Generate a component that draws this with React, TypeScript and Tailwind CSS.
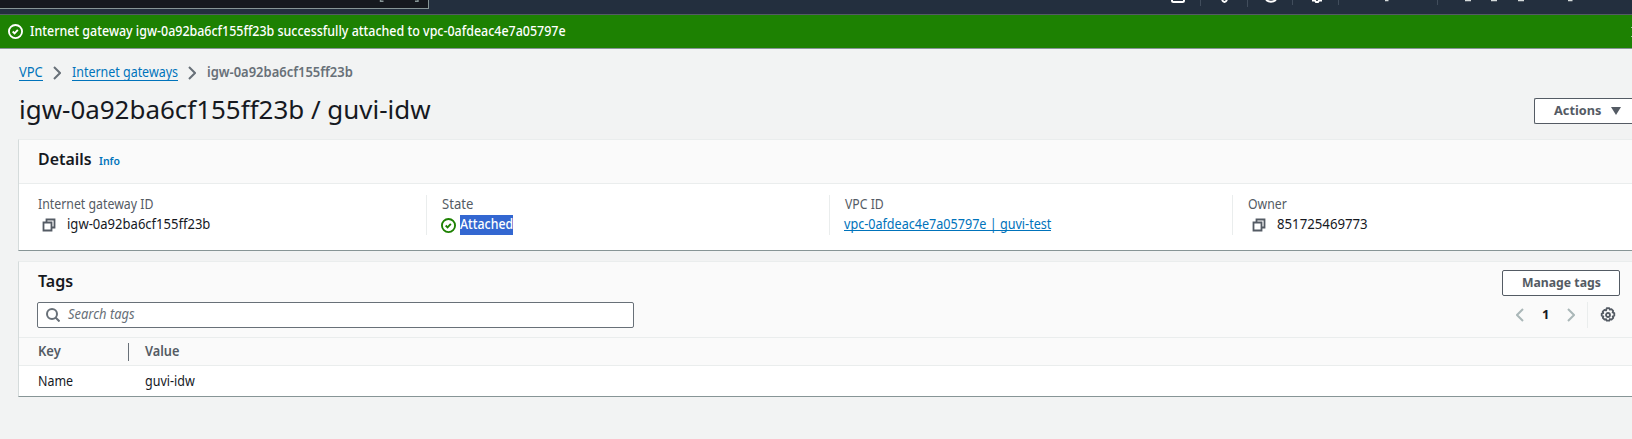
import React from "react";

function T({ w, className, children }: { w: number; className: string; children: React.ReactNode }) {
  const ref = React.useRef<HTMLSpanElement>(null);
  const [s, setS] = React.useState(1);
  React.useLayoutEffect(() => {
    if (ref.current) setS(w / ref.current.offsetWidth);
  }, [w]);
  return (
    <span className="flex shrink-0 whitespace-nowrap" style={{ width: w }}>
      <span ref={ref} className={"shrink-0 origin-left whitespace-nowrap " + className} style={{ transform: `translateY(-1px) scaleX(${s})` }}>
        {children}
      </span>
    </span>
  );
}

const Check = ({ className }: { className: string }) => (
  <svg viewBox="0 0 16 16" className={className} fill="none" stroke="currentColor" strokeWidth="2">
    <circle cx="8" cy="8" r="7" />
    <path d="M5 8l2 2 3.500-3.800" />
  </svg>
);

const Copy = () => (
  <svg viewBox="0 0 14 14" className="h-[14px] w-[14px] shrink-0 text-[#545b64]" fill="none" stroke="currentColor" strokeWidth="1.8">
    <path d="M1.500 4.500h8v8h-8z" />
    <path d="M4.500 4.500V1.500h8v8h-3" />
  </svg>
);

const Chevron = ({ className }: { className: string }) => (
  <svg viewBox="0 0 8 14" className={"h-[14px] w-2 shrink-0 " + className} fill="none" stroke="currentColor" strokeWidth="2">
    <path d="M1 1l6 6-6 6" />
  </svg>
);

const Gear = () => (
  <svg viewBox="0 0 16 16" className="h-4 w-4 shrink-0 text-[#545b64]" fill="none" stroke="currentColor" strokeWidth="1.8" strokeLinejoin="round">
    <path d="M6.7 1.2h2.6l.5 1.5 1.6-.6 1.8 1.8-.6 1.600 1.700.6v2.600l-1.600.6.6 1.500-1.800 1.800-1.600-.6-.6 1.700H6.7l-.6-1.600-1.500.6-1.800-1.800.6-1.600-1.700-.6V6.700l1.600-.6-.6-1.500 1.800-1.800 1.600.6z" />
    <circle cx="8" cy="8" r="2" />
  </svg>
);

function Field({ label, labelW, divider, children }: { label: string; labelW: number; divider?: boolean; children: React.ReactNode }) {
  return (
    <div className={"h-10 shrink-0 " + (divider ? "w-[403px] border-l border-[#eaeded] pl-[15px]" : "w-[407px] pl-[19px]")}>
      <T w={labelW} className="text-[13.5px] leading-5 text-[#545b64]">{label}</T>
      <div className="flex h-5 items-center">{children}</div>
    </div>
  );
}

export default function App() {
  return (
    <div className="h-[439px] w-[1632px] overflow-hidden bg-[#f2f3f3] font-['Noto_Sans',sans-serif] text-[#16191f]">
      <header className="flex h-[15px] items-start border-b border-[#545b64] bg-[#232f3e]">
        <div className="h-[9px] w-[429px] border-r border-b border-[#879596] bg-[#16191f]">
          <svg width="428" height="8" fill="none" stroke="#879596" strokeWidth="1.4">
            <path d="M380.500 0v1.300h3M415 1.300h3V0" />
          </svg>
        </div>
        <svg width="1203" height="8" fill="none" stroke="#fff" strokeWidth="2">
          <path d="M743 0v0.500q0 1.500 1.500 1.500h9q1.500 0 1.500-1.500V0" />
          <path d="M793 0q2.500 4 5 0" />
          <path d="M837 0q5 3.500 10 0" />
          <path d="M883 0.500h3l1 1.500h2l1-1.500h3" />
          <path d="M771.500 0v6M818.500 0v7M863.500 0v5M909.500 0v5M1008.500 0v5" stroke="#414d5c" strokeWidth="1" />
          <path d="M956 0.500h3.500M1036 0.500h6M1062 0.500h6M1089 0.500h6M1139 0.500h4.500" stroke="#d5dbdb" strokeWidth="1.300" />
        </svg>
      </header>
      <div className="flex h-[34px] items-center border-b border-[#879596] bg-[#1d8102] pl-2 text-white">
        <Check className="mr-[7px] h-[15px] w-[15px] shrink-0" />
        <T w={536} className="text-[13.5px] leading-5 font-medium">Internet gateway igw-0a92ba6cf155ff23b successfully attached to vpc-0afdeac4e7a05797e</T>
        <svg width="2" height="12" className="ml-auto shrink-0" fill="#a5cd9b"><path d="M1 1h1v1H1zM1 10h1v1H1z" /></svg>
      </div>

      <nav className="flex h-[48px] items-center pl-[19px] text-[13.5px] text-[#0073bb]">
        <div className="h-4 border-b border-[#0073bb]"><T w={24} className="leading-4">VPC</T></div>
        <Chevron className="mr-[11px] ml-[10px] text-[#687078]" />
        <div className="h-4 border-b border-[#0073bb]"><T w={106} className="leading-4">Internet gateways</T></div>
        <Chevron className="mr-[11px] ml-[10px] text-[#687078]" />
        <T w={146} className="leading-4 font-semibold text-[#687078]">igw-0a92ba6cf155ff23b</T>
      </nav>

      <div className="flex h-[42px] items-start justify-between pl-[19px]">
        <h1><T w={412} className="text-[25.5px] leading-[27px]">igw-0a92ba6cf155ff23b / guvi-idw</T></h1>
        <button className="mt-px flex h-[26px] w-[98px] shrink-0 items-center rounded-l-[2px] border border-r-0 border-[#545b64] bg-white pl-[19px] text-[#545b64]">
          <T w={47} className="text-[13px] leading-5 font-bold">Actions</T>
          <svg width="10" height="8" className="ml-[10px]" fill="currentColor"><path d="M0 0h10L5 8z" /></svg>
        </button>
      </div>

      <section className="ml-[18px] h-[112px] border-t border-b border-l border-[#eaeded] border-b-[#879596] border-l-[#d5dbdb] bg-white">
        <div className="flex h-[44px] border-b border-[#eaeded] bg-[#fafafa] pl-[19px]">
          <h2 className="pt-2"><T w={54} className="text-[16.5px] leading-6 font-semibold">Details</T></h2>
          <div className="pt-[14px] pl-[7px]"><T w={21} className="text-[11px] leading-4 font-semibold text-[#0073bb]">Info</T></div>
        </div>
        <div className="flex pt-[11px]">
          <Field label="Internet gateway ID" labelW={115}>
            <div className="flex items-center gap-[11px] pl-1"><Copy /><T w={143} className="text-[13.5px] leading-5">igw-0a92ba6cf155ff23b</T></div>
          </Field>
          <Field label="State" labelW={31} divider>
            <Check className="mr-1 -ml-px h-[15px] w-[15px] text-[#1d8102]" />
            <div className="h-5 bg-[#3367d1] text-white"><T w={53} className="text-[13.5px] leading-5 font-medium">Attached</T></div>
          </Field>
          <Field label="VPC ID" labelW={39} divider>
            <div className="mb-[2px] -ml-px h-[14px] border-b border-[#0073bb] text-[#0073bb]"><T w={207} className="text-[13.5px] leading-4">vpc-0afdeac4e7a05797e | guvi-test</T></div>
          </Field>
          <Field label="Owner" labelW={39} divider>
            <div className="flex items-center gap-[11px] pl-1"><Copy /><T w={91} className="text-[13.5px] leading-5">851725469773</T></div>
          </Field>
        </div>
      </section>

      <section className="mt-[10px] ml-[18px] h-[136px] border-t border-b border-l border-[#eaeded] border-b-[#879596] border-l-[#d5dbdb] bg-white">
        <div className="flex h-[76px] justify-between border-b border-[#eaeded] bg-[#fafafa] pr-3 pl-[18px]">
          <div>
            <h2 className="h-10 pt-2 pl-px"><T w={35} className="text-[16.5px] leading-6 font-semibold">Tags</T></h2>
            <div className="flex h-[26px] w-[597px] items-center rounded-[2px] border border-[#687078] bg-white pl-2 text-[#687078]">
              <svg viewBox="0 0 14 14" className="mr-2 h-[14px] w-[14px]" fill="none" stroke="currentColor" strokeWidth="2"><circle cx="6" cy="6" r="5" /><path d="M9.500 9.500L13.500 13.500" /></svg>
              <T w={67} className="text-[13.5px] leading-5 italic">Search tags</T>
            </div>
          </div>
          <div className="flex flex-col items-end pt-2">
            <button className="flex h-[26px] w-[118px] items-center justify-center rounded-[2px] border border-[#545b64] bg-white text-[#545b64]">
              <T w={79} className="text-[13px] leading-5 font-bold">Manage tags</T>
            </button>
            <div className="mt-[6px] flex h-[26px] items-center pr-1">
              <Chevron className="rotate-180 text-[#aab7b8]" />
              <div className="flex w-[43px] justify-center"><T w={7} className="text-[13px] leading-5 font-bold">1</T></div>
              <Chevron className="text-[#aab7b8]" />
              <div className="mr-3 ml-3 h-[26px] w-px bg-[#eaeded]" />
              <Gear />
            </div>
          </div>
        </div>
        <div className="flex h-[28px] items-center border-b border-[#eaeded] bg-[#fafafa] pl-[19px] text-[#545b64]">
          <div className="flex h-[18px] w-[91px] items-center border-r border-[#687078]"><T w={23} className="text-[13.5px] leading-5 font-semibold">Key</T></div>
          <div className="pl-4"><T w={34} className="text-[13.5px] leading-5 font-semibold">Value</T></div>
        </div>
        <div className="flex h-[31px] items-center pl-[19px]">
          <div className="w-[107px]"><T w={35} className="text-[13.5px] leading-5">Name</T></div>
          <T w={50} className="text-[13.5px] leading-5">guvi-idw</T>
        </div>
      </section>
    </div>
  );
}
